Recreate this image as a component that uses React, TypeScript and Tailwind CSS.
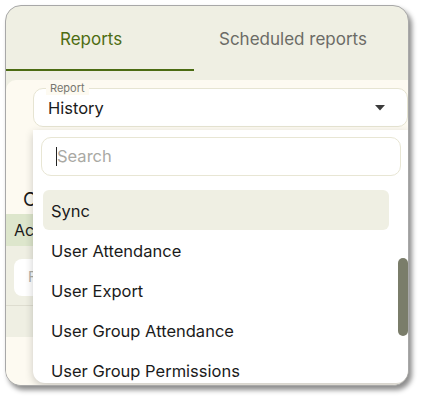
import React from "react";

const font = { fontFamily: "Inter, 'Noto Sans', sans-serif" };

export default function App() {
  const items = ["Sync", "User Attendance", "User Export", "User Group Attendance", "User Group Permissions"];
  return (
    <div className="w-[421px] h-[399px] bg-white pt-[5px] pl-[5px]" style={font}>
      <div className="relative w-[404px] h-[381px] rounded-[16px] border border-[#a8a8a8] bg-[#efefe3] overflow-hidden shadow-[3px_4px_5px_rgba(0,0,0,0.45)]">
        {/* tabs */}
        <div className="flex h-[65px]">
          <div className="w-[188px] flex items-center pl-[54px] pt-[4px] border-b-[2px] border-[#4b6b12] text-[17px] text-[#4d6c12]">
            Reports
          </div>
          <div className="flex-1 flex items-center pl-[25px] pt-[2px] text-[17px] text-[#6b6b66]">
            Scheduled reports
          </div>
        </div>
        <div className="h-[9px]" />
        {/* content */}
        <div className="bg-[#fdfaf1] rounded-tl-[10px] h-[306px] flex flex-col">
          <div className="pl-[27px] pt-[8px]">
            <div className="relative h-[39px] rounded-[10px] border border-[#e6e4d2] bg-white flex items-center pl-[14px] pr-[22px]">
              <span className="absolute left-[12px] -top-[8px] px-[4px] text-[11px] leading-[14px] text-[#777770] bg-[#fdfaf1]">Report</span>
              <span className="flex-1 text-[16.5px] text-[#1b1b1b] pt-[2px]">History</span>
              <svg width="10" height="6" viewBox="0 0 10 6"><path d="M0 0h10L5 5.5z" fill="#3b3b3b" /></svg>
            </div>
          </div>
          <div className="h-[61px]" />
          <div className="pl-[17px] text-[19px] leading-[24px] text-[#1b1b1b] h-[26px]">Choose</div>
          <div className="h-[32px] bg-[#dde6cc] flex items-center pl-[8px] text-[16px] text-[#1b1b1b]">Actions</div>
          <div className="h-[60px] bg-[#efefe3] border-b border-[#deddd0] pl-[8px] pt-[13px]">
            <div className="w-[120px] h-[37px] rounded-[8px] bg-white flex items-center pl-[14px] text-[15px] text-[#b0b0a8]">Filter</div>
          </div>
          <div className="h-[31px] bg-[#efefe3]" />
          <div className="flex-1" />
        </div>

        {/* dropdown */}
        <div className="absolute left-[27px] top-[124px] w-[375px] h-[253px] bg-white rounded-b-[12px] shadow-[0_3px_8px_rgba(0,0,0,0.2)] overflow-hidden">
          <div className="pl-[8px] pr-[7px] pt-[7px]">
            <div className="h-[39px] rounded-[10px] border border-[#e8e6d4] flex items-center pl-[14px] text-[16.5px] text-[#a9a9a4]">
              <span className="w-[1px] h-[19px] bg-[#222]" />
              Search
            </div>
          </div>
          <div className="flex pt-[14px]">
            <div className="flex-1 pl-[10px] pr-[19px] flex flex-col">
              {items.map((it, i) => (
                <div
                  key={it}
                  className={
                    i === 0
                      ? "h-[40px] flex items-center pl-[8px] pt-[2px] rounded-[6px] bg-[#efefe3] text-[16.5px] text-[#1b1b1b]"
                      : "h-[40px] flex items-center pl-[8px] pt-[2px] text-[16.5px] text-[#1b1b1b]"
                  }
                >
                  {it}
                </div>
              ))}
            </div>
          </div>
          <div className="absolute left-[365px] top-[128px] w-[10px] h-[78px] rounded-full bg-[#7a7d6a]" />
        </div>
      </div>
    </div>
  );
}
